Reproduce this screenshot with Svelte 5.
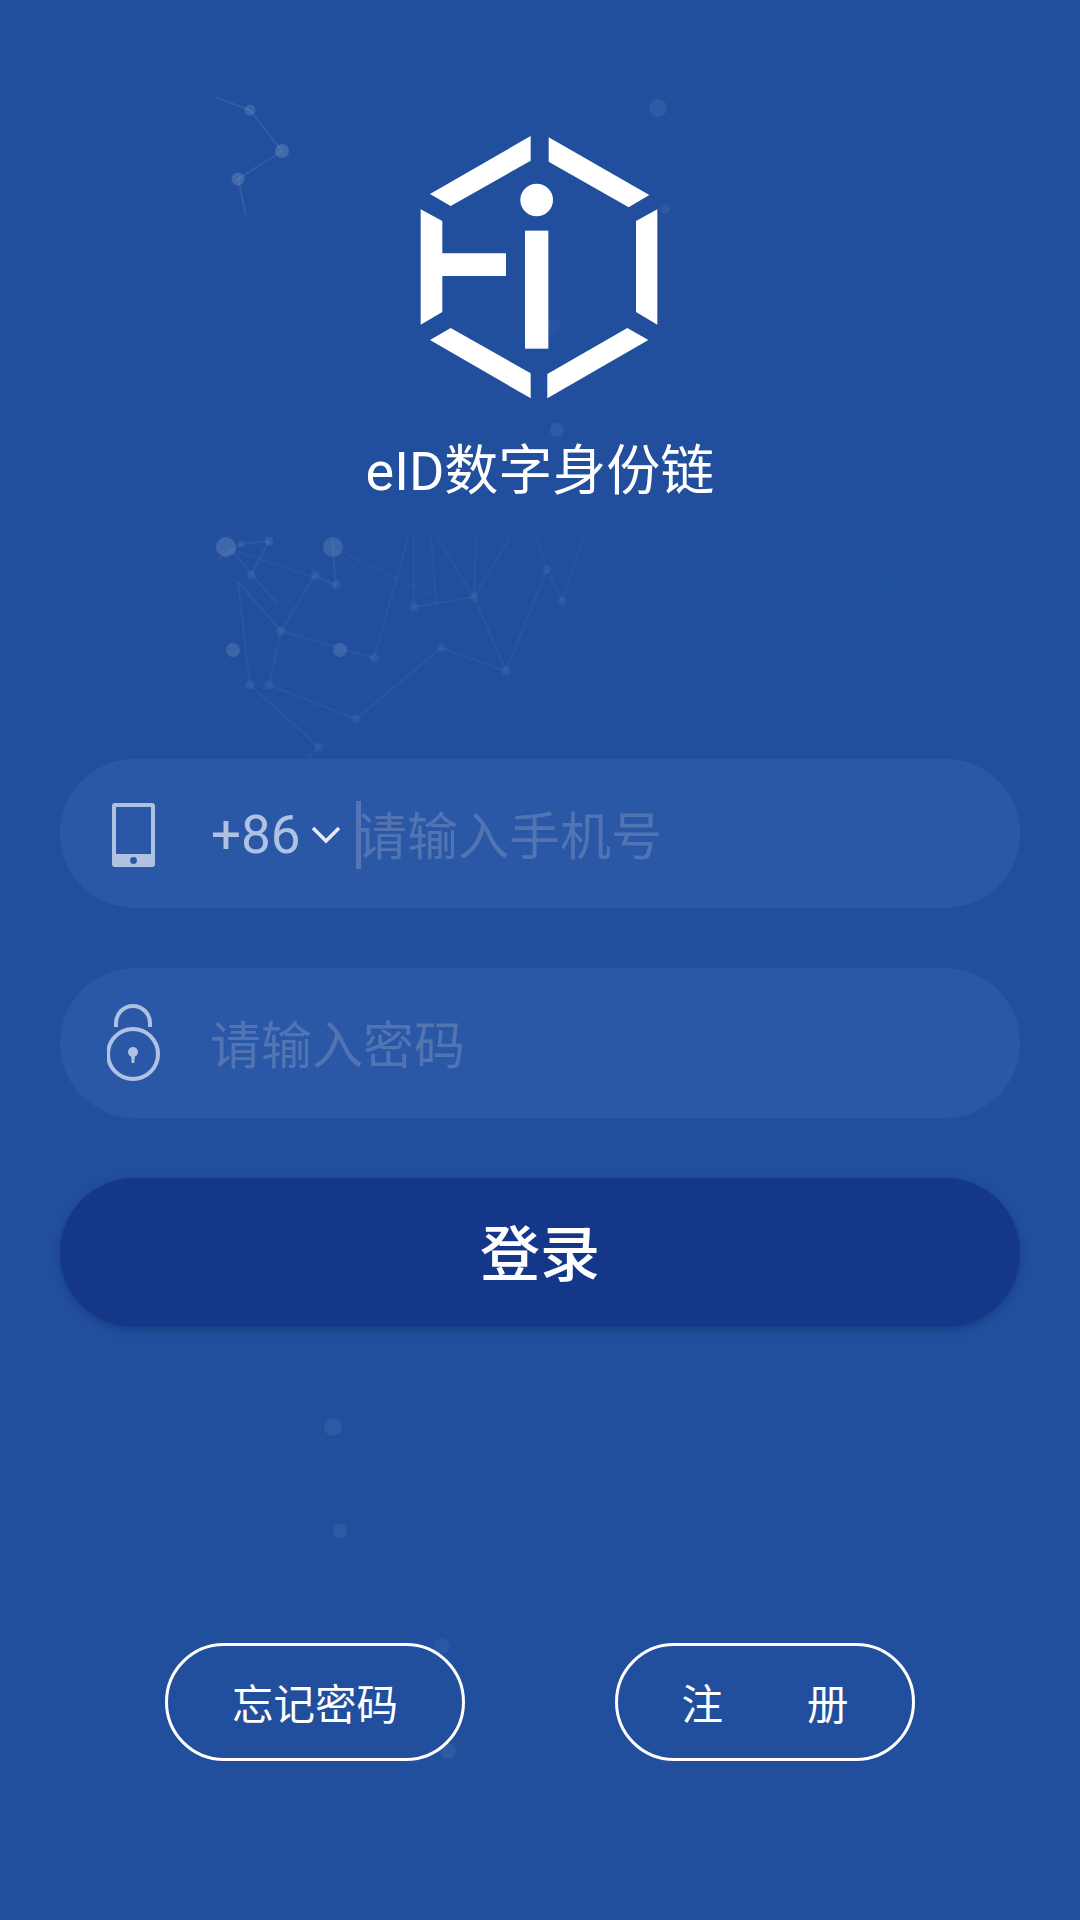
<script>
  const nodes = [
    [226,547,10,.14],[241,544,3.5,.07],[269,541,4.5,.08],[251,575,4.5,.06],[315,575,4.5,.06],[336,585,4.5,.06],[333,547,10,.12],
    [281,631,4.5,.06],[233,650,7,.12],[340,650,7,.12],[374,658,4.5,.06],[250,685,4.5,.06],[269,685,4.5,.06],[356,719,4.5,.05],
    [441,648,4.5,.05],[506,671,4.5,.05],[414,607,4.5,.06],[474,597,4.5,.05],[547,569,4.5,.05],[562,601,4.5,.05],[319,747,4.5,.05],
    [250,110,5.5,.12],[282,151,7,.15],[238,179,6.5,.15],
    [658,108,9,.07],[665,209,5,.05],[553,327,8,.03],[557,430,7,.07],
    [333,1427,9,.06],[340,1531,7,.07],[442,1646,8,.05],[448,1751,8,.06]
  ];
  const lines = [
    [217,560,241,544,.05],[241,544,269,541,.05],[269,541,251,575,.05],[233,552,277,604,.04],[233,550,336,585,.03],[315,575,336,585,.04],
    [332,540,336,585,.05],[315,575,281,631,.04],[238,582,281,631,.04],[238,582,250,685,.04],[281,631,269,685,.04],[281,631,374,658,.04],
    [374,658,408,538,.035],[269,685,356,719,.035],[250,685,319,747,.035],[319,747,307,759,.03],[356,719,441,648,.035],[441,648,506,671,.035],
    [506,671,474,597,.035],[506,671,547,569,.035],[414,607,474,597,.04],[414,607,414,538,.03],[436,603,431,538,.03],[474,597,437,538,.03],
    [474,597,476,538,.03],[474,597,510,538,.03],[547,569,536,538,.025],[562,601,547,569,.03],[562,601,583,538,.025],[333,548,433,595,.02],
    [333,548,387,597,.02],[217,98,250,110,.07],[250,110,282,151,.07],[282,151,238,179,.07],[238,179,246,215,.07]
  ];
  const rings = [[916,365,8],[873,578,7],[895,587,7],[925,570,7]];
</script>

<div class="screen">
  <svg class="backdrop" viewBox="0 0 1080 1920" aria-hidden="true">
    {#each lines as [x1, y1, x2, y2, o]}
      <line {x1} {y1} {x2} {y2} stroke="#fff" stroke-width="2" opacity={o} />
    {/each}
    {#each nodes as [cx, cy, r, o]}
      <circle {cx} {cy} {r} fill="#fff" opacity={o} />
    {/each}
    {#each rings as [cx, cy, r]}
      <circle {cx} {cy} {r} fill="none" stroke="#1c58ab" stroke-width="3" opacity=".4" />
    {/each}
    <g stroke="#1c58ab" stroke-width="3" fill="none" opacity=".4">
      <path d="M873 365H897" />
      <path d="M880 583L889 589" />
      <path d="M892 560Q900 572 908 560" />
      <path d="M897 572V581" />
    </g>
  </svg>

  <header class="brand">
    <svg class="logo" viewBox="0 0 960 960" aria-label="logo">
      <g fill="#fff">
        <polygon points="452,78 452,152 212,288 150,252" />
        <polygon points="506,82 506,155 746,292 808,255" />
        <polygon points="832,298 832,644 768,606 768,333" />
        <polygon points="502,865 502,792 742,654 805,690" />
        <polygon points="452,865 452,790 212,654 150,690" />
        <polygon points="122,298 187,333 187,430 378,430 378,498 187,498 187,606 122,644" />
        <circle cx="470" cy="270" r="49" />
        <rect x="435" y="362" width="70" height="354" />
      </g>
    </svg>
    <h1>eID数字身份链</h1>
  </header>

  <form class="form">
    <div class="field">
      <span class="icon">
        <svg width="46" height="66" viewBox="0 0 46 66">
          <path fill="#b0c2e2" fill-rule="evenodd" d="M4 2h37a3 3 0 0 1 3 3v58a3 3 0 0 1-3 3H4a3 3 0 0 1-3-3V5a3 3 0 0 1 3-3zm1 4v47h35V6z" />
          <circle cx="22.5" cy="59.5" r="3.4" fill="#2b58a6" />
        </svg>
      </span>
      <span class="code">+86</span>
      <svg class="chevron" width="30" height="18" viewBox="0 0 30 18">
        <path d="M2 2L15 15L28 2" fill="none" stroke="#e4eaf6" stroke-width="3.5" />
      </svg>
      <span class="caret"></span>
      <input class="input phone" type="tel" placeholder="请输入手机号" />
    </div>

    <div class="field">
      <span class="icon">
        <svg width="56" height="80" viewBox="0 0 56 80">
          <g fill="none" stroke="#b0c2e2" stroke-width="4">
            <circle cx="26" cy="51" r="25" />
            <path d="M9 24V20a17 17 0 0 1 34 0v4" />
          </g>
          <circle cx="26" cy="49" r="5" fill="#b0c2e2" />
          <path d="M24 50h4l-.6 10h-2.8z" fill="#b0c2e2" />
        </svg>
      </span>
      <input class="input pass" type="password" placeholder="请输入密码" />
    </div>

    <button class="login" type="button"><span>登录</span></button>
  </form>

  <footer class="links">
    <button class="link" type="button">忘记密码</button>
    <button class="link wide" type="button"><span>注</span><span>册</span></button>
  </footer>
</div>

<style>
  :global(body) {
    margin: 0;
    background: #214f9e;
  }
  .screen {
    position: relative;
    width: 1080px;
    height: 1920px;
    overflow: hidden;
    display: flex;
    flex-direction: column;
    background: #214f9e;
    font-family: Roboto, "Noto Sans CJK SC", sans-serif;
    color: #fff;
  }
  .backdrop {
    position: absolute;
    inset: 0;
    width: 1080px;
    height: 1920px;
  }
  .brand {
    position: relative;
    display: flex;
    flex-direction: column;
    align-items: center;
    padding-top: 110px;
    height: 649px;
    box-sizing: border-box;
  }
  .logo {
    display: block;
    width: 320px;
    height: 320px;
  }
  h1 {
    margin: 2px 0 0;
    font-size: 54px;
    font-weight: 400;
    line-height: 80px;
    white-space: nowrap;
  }
  .form {
    position: relative;
    display: flex;
    flex-direction: column;
    gap: 60px;
    padding: 110px 60px 0;
    height: 678px;
    box-sizing: border-box;
  }
  .field {
    height: 150px;
    border-radius: 75px;
    background: #2b58a6;
    display: flex;
    align-items: center;
  }
  .icon {
    width: 151px;
    padding-left: 47px;
    box-sizing: border-box;
    flex: none;
    display: flex;
    justify-content: flex-start;
  }
  .field:first-child .icon {
    padding-left: 51px;
  }
  .code {
    font-size: 53px;
    line-height: 60px;
    color: #b0c2e2;
    width: 100px;
    flex: none;
    margin-top: 3px;
  }
  .chevron {
    flex: none;
    margin-top: 2px;
  }
  .caret {
    flex: none;
    width: 5px;
    height: 68px;
    margin-left: 15px;
    margin-top: 2px;
    background: #5476b6;
  }
  .input {
    flex: 1;
    min-width: 0;
    border: 0;
    outline: 0;
    padding: 0;
    background: transparent;
    font-family: inherit;
    font-size: 51px;
    line-height: 72px;
    height: 72px;
    margin-top: 8px;
    color: #fff;
  }
  .input.phone {
    margin-left: -5px;
    margin-right: 40px;
  }
  .input.pass {
    margin-left: -1px;
  }
  .input::placeholder {
    color: #5274b3;
    opacity: 1;
  }
  .login {
    height: 150px;
    border: 0;
    border-radius: 75px;
    background: #14378a;
    box-shadow: 0 3px 8px rgba(10, 30, 80, 0.35);
    color: #fff;
    font-family: inherit;
    font-size: 60px;
    font-weight: 500;
    padding: 0 0 5px;
  }
  .links {
    position: relative;
    display: flex;
    justify-content: center;
    gap: 150px;
    padding-top: 316px;
  }
  .link {
    width: 300px;
    height: 118px;
    box-sizing: border-box;
    border: 3px solid #fff;
    border-radius: 59px;
    background: transparent;
    color: #fff;
    font-family: inherit;
    font-size: 41.5px;
    padding: 0;
  }
  .wide {
    display: flex;
    align-items: center;
    justify-content: center;
    gap: 84px;
  }
</style>
